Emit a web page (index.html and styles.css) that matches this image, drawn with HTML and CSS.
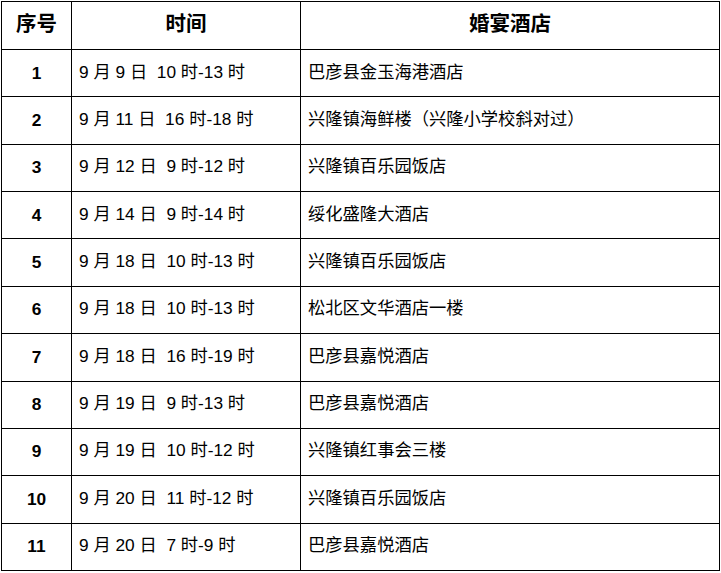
FILE: index.html
```html
<!DOCTYPE html>
<html lang="zh-CN">
<head>
<meta charset="utf-8">
<link rel="stylesheet" href="styles.css">
</head>
<body>
<div class="table">
  <div class="cell head">序号</div><div class="cell head">时间</div><div class="cell head">婚宴酒店</div>
  <div class="cell num">1</div><div class="cell">9 月 9 日&nbsp; 10 时-13 时</div><div class="cell">巴彦县金玉海港酒店</div>
  <div class="cell num">2</div><div class="cell">9 月 11 日&nbsp; 16 时-18 时</div><div class="cell">兴隆镇海鲜楼（兴隆小学校斜对过）</div>
  <div class="cell num">3</div><div class="cell">9 月 12 日&nbsp; 9 时-12 时</div><div class="cell">兴隆镇百乐园饭店</div>
  <div class="cell num">4</div><div class="cell">9 月 14 日&nbsp; 9 时-14 时</div><div class="cell">绥化盛隆大酒店</div>
  <div class="cell num">5</div><div class="cell">9 月 18 日&nbsp; 10 时-13 时</div><div class="cell">兴隆镇百乐园饭店</div>
  <div class="cell num">6</div><div class="cell">9 月 18 日&nbsp; 10 时-13 时</div><div class="cell">松北区文华酒店一楼</div>
  <div class="cell num">7</div><div class="cell">9 月 18 日&nbsp; 16 时-19 时</div><div class="cell">巴彦县嘉悦酒店</div>
  <div class="cell num">8</div><div class="cell">9 月 19 日&nbsp; 9 时-13 时</div><div class="cell">巴彦县嘉悦酒店</div>
  <div class="cell num">9</div><div class="cell">9 月 19 日&nbsp; 10 时-12 时</div><div class="cell">兴隆镇红事会三楼</div>
  <div class="cell num">10</div><div class="cell">9 月 20 日&nbsp; 11 时-12 时</div><div class="cell">兴隆镇百乐园饭店</div>
  <div class="cell num">11</div><div class="cell">9 月 20 日&nbsp; 7 时-9 时</div><div class="cell">巴彦县嘉悦酒店</div>
</div>
</body>
</html>
```
FILE: styles.css
```css
html, body {
  margin: 0;
  padding: 0;
  background: #fff;
}
body {
  padding: 1px 0 0 1px;
  font-family: "Liberation Sans", "Noto Sans CJK SC", sans-serif;
  color: #000;
}
.table {
  box-sizing: border-box;
  width: 719px;
  height: 570px;
  padding: 1px;
  background: #000;
  display: grid;
  grid-template-columns: 69px 228px 418px;
  grid-template-rows: 47px repeat(11, 1fr);
  gap: 1px;
}
.cell {
  background: #fff;
  display: flex;
  align-items: center;
  padding: 0 0 2px 7px;
  font-size: 17.3px;
  line-height: 1;
  white-space: pre;
}
.head {
  justify-content: center;
  padding: 0 0 3px 0;
  font-weight: bold;
  font-size: 20.5px;
}
.num {
  justify-content: center;
  padding: 0;
  font-weight: bold;
}
```
